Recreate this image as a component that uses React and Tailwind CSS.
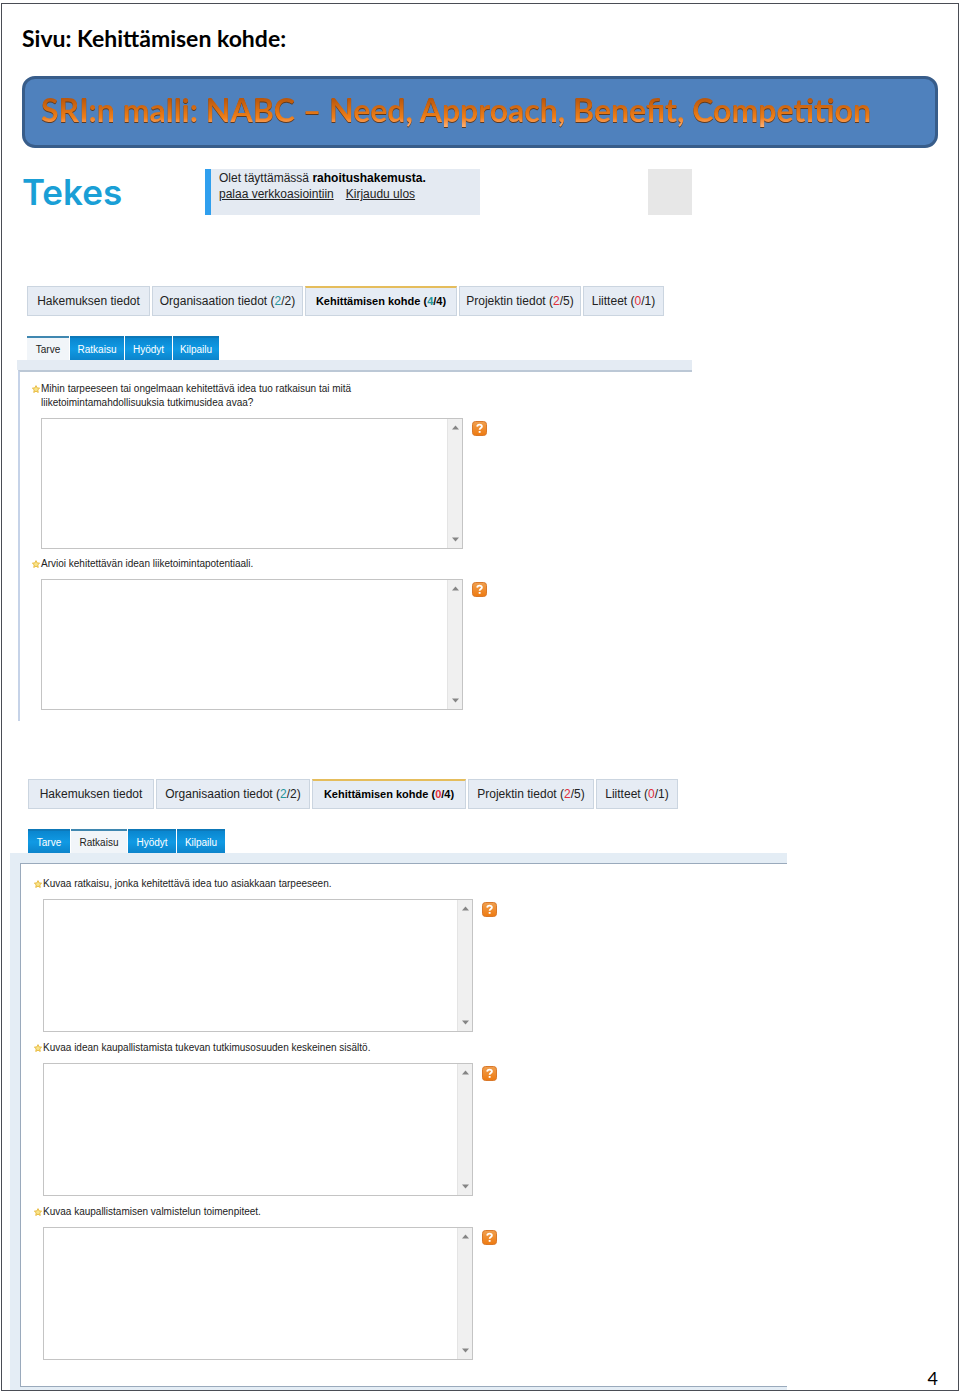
import { useState } from "react";
import clsx from "clsx";

const needForm = {
    id: "tarve",
    activeStep: "Tarve",
    tabs: [
        { label: "Hakemuksen tiedot", width: "w-[123px]" },
        { label: "Organisaation tiedot", done: 2, total: 2, width: "w-[151px]" },
        { label: "Kehittämisen kohde", done: 4, total: 4, width: "w-[152px]", active: true },
        { label: "Projektin tiedot", done: 2, total: 5, width: "w-[122px]" },
        { label: "Liitteet", done: 0, total: 1, width: "w-[81px]" },
    ],
    steps: [
        { label: "Tarve", width: "w-[42px]" },
        { label: "Ratkaisu", width: "w-[54px]" },
        { label: "Hyödyt", width: "w-[47px]" },
        { label: "Kilpailu", width: "w-[46px]" },
    ],
    questions: [
        "Mihin tarpeeseen tai ongelmaan kehitettävä idea tuo ratkaisun tai mitä liiketoimintamahdollisuuksia tutkimusidea avaa?",
        "Arvioi kehitettävän idean liiketoimintapotentiaali.",
    ],
}

const solutionForm = {
    id: "ratkaisu",
    activeStep: "Ratkaisu",
    tabs: [
        { label: "Hakemuksen tiedot", width: "w-[126px]" },
        { label: "Organisaation tiedot", done: 2, total: 2, width: "w-[154px]" },
        { label: "Kehittämisen kohde", done: 0, total: 4, width: "w-[154px]", active: true },
        { label: "Projektin tiedot", done: 2, total: 5, width: "w-[126px]" },
        { label: "Liitteet", done: 0, total: 1, width: "w-[82px]" },
    ],
    steps: [
        { label: "Tarve", width: "w-[42px]" },
        { label: "Ratkaisu", width: "w-[56px]" },
        { label: "Hyödyt", width: "w-[48px]" },
        { label: "Kilpailu", width: "w-[48px]" },
    ],
    questions: [
        "Kuvaa ratkaisu, jonka kehitettävä idea tuo asiakkaan tarpeeseen.",
        "Kuvaa idean kaupallistamista tukevan tutkimusosuuden keskeinen sisältö.",
        "Kuvaa kaupallistamisen valmistelun toimenpiteet.",
    ],
}

const App = () => {
    return (
        <div className="bg-white px-px pt-[3px] pb-1 font-['Liberation_Sans',Arial,sans-serif] text-[#222]">
            <main className="border border-[#4a4d55]">
                <h1 className="pl-5 pt-5 font-['Lato',sans-serif] text-[23px] leading-7 font-bold text-black">Sivu: Kehittämisen kohde:</h1>
                <Banner />
                <SiteHeader />
                <section className="mt-[71px] ml-[15px] max-w-[675px]">
                    <div className="pl-[10px]">
                        <MainTabs tabs={needForm.tabs} />
                        <StepTabs steps={needForm.steps} initial={needForm.activeStep} />
                    </div>
                    <div className="h-[10px] bg-[#e4ebf3]" />
                    <div className="ml-px border-t-2 border-l-2 border-t-[#bcc8d6] border-l-[#c6d3e8] pt-[10px] pb-[11px] pl-3">
                        <div className="flex flex-col gap-2">
                            {needForm.questions.map((question, index) => (
                                <Question key={index} id={`${needForm.id}-${index}`} text={question} boxClass="w-[422px] h-[131px]" />
                            ))}
                        </div>
                    </div>
                </section>
                <div className="mt-[58px] flex justify-between pl-2 pr-5">
                    <section className="w-[777px]">
                        <div className="pl-[18px]">
                            <MainTabs tabs={solutionForm.tabs} />
                            <StepTabs steps={solutionForm.steps} initial={solutionForm.activeStep} />
                        </div>
                        <div className="bg-[#e4edf5] pt-[10px] pl-[10px] pb-[3px]">
                            <div className="border border-r-0 border-[#9aaabc] bg-white pt-[13px] pb-[26px] pl-[13px]">
                                <div className="flex flex-col gap-[9px]">
                                    {solutionForm.questions.map((question, index) => (
                                        <Question key={index} id={`${solutionForm.id}-${index}`} text={question} boxClass="w-[430px] h-[133px]" />
                                    ))}
                                </div>
                            </div>
                        </div>
                    </section>
                    <div className="self-end font-['Lato',sans-serif] text-lg leading-6 text-black">4</div>
                </div>
            </main>
        </div>
    )
}

export default App

const Banner = () => {
    return (
        <div className="mx-5 mt-6 flex h-[72px] items-center rounded-[13px] border-[3px] border-[#385d8a] bg-[#4f81bd] pb-1 pl-4">
            <h2 className="bg-linear-to-b from-[#b8560c] from-20% via-[#f08019] via-70% to-[#ffc08a] bg-clip-text font-['Lato',sans-serif] text-[32px] leading-10 font-bold whitespace-nowrap text-transparent drop-shadow-[0_1px_0_#5b3a22]">
                SRI:n malli: NABC – Need, Approach, Benefit, Competition
            </h2>
        </div>
    )
}

const SiteHeader = () => {
    return (
        <header className="mt-[21px] ml-5 flex h-[46px] max-w-[670px] items-start">
            <div className="w-[183px] shrink-0 font-['Inter',sans-serif] text-[35px] leading-[46px] font-semibold text-[#1a9fd6]">Tekes</div>
            <div className="h-full w-[275px] border-l-[6px] border-[#2f9fee] bg-[#e4eaf2] pl-2 text-xs leading-4">
                <p className="pt-px">Olet täyttämässä <b className="text-black">rahoitushakemusta.</b></p>
                <p className="flex gap-3">
                    <a href="#verkkoasiointi" className="underline">palaa verkkoasiointiin</a>
                    <a href="#ulos" className="underline">Kirjaudu ulos</a>
                </p>
            </div>
            <div className="ml-auto h-full w-11 bg-[#e7e7e7]" />
        </header>
    )
}

const MainTabs = ({ tabs }) => {
    return (
        <nav className="flex gap-0.5 text-xs whitespace-nowrap">
            {tabs.map((tab, index) => (
                <a
                    key={index}
                    href={`#tab-${index}`}
                    className={clsx(
                        "flex h-[30px] items-center justify-center border border-[#cbd5e0] bg-[#e6ecf4]",
                        tab.width,
                        tab.active && "border-t-2 border-t-[#e5bd5c] text-[11px] font-bold text-black"
                    )}
                >
                    <span>
                        {tab.label}
                        {tab.total && <> (<span className={tab.done === tab.total ? "text-[#26959b]" : "text-[#e02f3c]"}>{tab.done}</span>/{tab.total})</>}
                    </span>
                </a>
            ))}
        </nav>
    )
}

const StepTabs = ({ steps, initial }) => {
    const [active, setActive] = useState(initial)

    return (
        <div className="mt-5 flex gap-px text-[10px]">
            {steps.map((step) => (
                <button
                    key={step.label}
                    onClick={() => setActive(step.label)}
                    className={clsx(
                        "h-6 border-t-2",
                        step.width,
                        active === step.label
                            ? "border-[#3f87b0] bg-[#f1f5f9] text-[#222]"
                            : "border-[#0d78b8] bg-linear-to-b from-[#0a86cf] via-[#109ae4] to-[#0c84cb] text-white"
                    )}
                >
                    {step.label}
                </button>
            ))}
        </div>
    )
}

const Question = ({ id, text, boxClass }) => {
    return (
        <div>
            <div className="flex">
                <Star />
                <label htmlFor={id} className="max-w-[350px] text-[10px] leading-[14px]">{text}</label>
            </div>
            <div className="mt-2 ml-[9px] flex items-start gap-[9px]">
                <div className={clsx("flex border border-[#c4c4c4] bg-white", boxClass)}>
                    <textarea id={id} className="min-w-0 flex-1 resize-none p-1 text-[10px] outline-none" />
                    <div className="flex w-[15px] flex-col items-center justify-between border-l border-[#e4e4e4] bg-[#f0f0f0] py-[6px]">
                        <svg width="7" height="5" viewBox="0 0 7 5"><path d="M0 4.5 3.5.5 7 4.5Z" fill="#858585" /></svg>
                        <svg width="7" height="5" viewBox="0 0 7 5"><path d="M0 .5 3.5 4.5 7 .5Z" fill="#858585" /></svg>
                    </div>
                </div>
                <HelpButton />
            </div>
        </div>
    )
}

const Star = () => {
    return (
        <svg className="mt-[3px] mr-px shrink-0" width="8" height="8" viewBox="0 0 10 10">
            <path d="M5 .8 6.3 3.6 9.5 4 7.2 6.1 7.8 9.3 5 7.7 2.2 9.3 2.8 6.1.5 4 3.7 3.6Z" fill="#f8e48a" stroke="#e8b93c" strokeWidth="1.2" />
        </svg>
    )
}

const HelpButton = () => {
    return (
        <button aria-label="Ohje" className="mt-[3px]">
            <svg width="15" height="15" viewBox="0 0 15 15">
                <defs>
                    <linearGradient id="help" x1="0" y1="0" x2="0" y2="1">
                        <stop offset="0" stopColor="#f0a050" />
                        <stop offset="1" stopColor="#ee7a10" />
                    </linearGradient>
                </defs>
                <rect x=".5" y=".5" width="14" height="14" rx="3" fill="url(#help)" stroke="#d9782a" />
                <path d="M5.2 5.6C5.3 4.2 6.2 3.6 7.5 3.6S9.9 4.3 9.9 5.5C9.9 7 7.6 7.1 7.6 8.8" fill="none" stroke="#fff" strokeWidth="1.8" />
                <rect x="6.7" y="10" width="1.9" height="1.8" fill="#fff" />
            </svg>
        </button>
    )
}
